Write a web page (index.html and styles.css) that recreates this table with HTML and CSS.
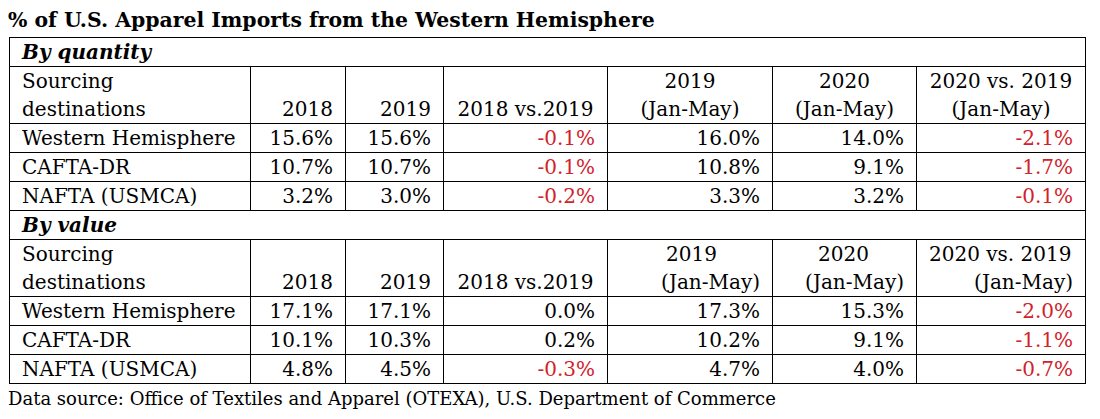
FILE: index.html
```html
<!DOCTYPE html>
<html>
<head>
<meta charset="utf-8">
<link rel="stylesheet" href="styles.css">
</head>
<body>
<div class="page">
  <h1 class="title">% of U.S. Apparel Imports from the Western Hemisphere</h1>
  <table class="grid">
    <colgroup>
      <col class="c1"><col class="c2"><col class="c3"><col class="c4"><col class="c5"><col class="c6"><col class="c7">
    </colgroup>
    <tbody>
      <tr class="section"><td colspan="7">By quantity</td></tr>
      <tr class="head">
        <td class="left">Sourcing<br>destinations</td>
        <td>2018</td>
        <td>2019</td>
        <td class="center">2018 vs.2019</td>
        <td class="center">2019<br>(Jan-May)</td>
        <td class="center">2020<br>(Jan-May)</td>
        <td class="center">2020 vs. 2019<br>(Jan-May)</td>
      </tr>
      <tr>
        <td class="left">Western Hemisphere</td><td>15.6%</td><td>15.6%</td><td class="neg">-0.1%</td><td>16.0%</td><td>14.0%</td><td class="neg">-2.1%</td>
      </tr>
      <tr>
        <td class="left">CAFTA-DR</td><td>10.7%</td><td>10.7%</td><td class="neg">-0.1%</td><td>10.8%</td><td>9.1%</td><td class="neg">-1.7%</td>
      </tr>
      <tr>
        <td class="left">NAFTA (USMCA)</td><td>3.2%</td><td>3.0%</td><td class="neg">-0.2%</td><td>3.3%</td><td>3.2%</td><td class="neg">-0.1%</td>
      </tr>
      <tr class="section"><td colspan="7">By value</td></tr>
      <tr class="head">
        <td class="left">Sourcing<br>destinations</td>
        <td>2018</td>
        <td>2019</td>
        <td class="center">2018 vs.2019</td>
        <td><span class="line l-2019">2019</span>(Jan-May)</td>
        <td><span class="line l-2020">2020</span>(Jan-May)</td>
        <td><span class="line l-vs">2020 vs. 2019</span>(Jan-May)</td>
      </tr>
      <tr>
        <td class="left">Western Hemisphere</td><td>17.1%</td><td>17.1%</td><td>0.0%</td><td>17.3%</td><td>15.3%</td><td class="neg">-2.0%</td>
      </tr>
      <tr>
        <td class="left">CAFTA-DR</td><td>10.1%</td><td>10.3%</td><td>0.2%</td><td>10.2%</td><td>9.1%</td><td class="neg">-1.1%</td>
      </tr>
      <tr>
        <td class="left">NAFTA (USMCA)</td><td>4.8%</td><td>4.5%</td><td class="neg">-0.3%</td><td>4.7%</td><td>4.0%</td><td class="neg">-0.7%</td>
      </tr>
    </tbody>
  </table>
  <p class="source">Data source: Office of Textiles and Apparel (OTEXA), U.S. Department of Commerce</p>
</div>
</body>
</html>
```

FILE: styles.css
```css
* { box-sizing: border-box; }

body {
  margin: 0;
  background: #ffffff;
  color: #000000;
  font-family: "DejaVu Serif", "Liberation Serif", serif;
}

.page {
  padding: 4px 0 0 8px;
}

.title {
  margin: 0;
  font-size: 20.4px;
  font-weight: bold;
  line-height: 33px;
  height: 33px;
  white-space: nowrap;
}

.grid {
  border-collapse: collapse;
  table-layout: fixed;
  width: 1076px;
  margin-left: 1px;
}

.c1 { width: 241px; }
.c2 { width: 95px; }
.c3 { width: 98px; }
.c4 { width: 164px; }
.c5 { width: 165px; }
.c6 { width: 144px; }
.c7 { width: 169px; }

.grid td {
  border: 1px solid #000000;
  padding: 0 12px;
  font-size: 20px;
  line-height: 28px;
  height: 29px;
  vertical-align: bottom;
  text-align: right;
  white-space: nowrap;
}

.grid .head td {
  height: 57px;
}

.grid td.left { text-align: left; }
.grid td.center { text-align: center; }

.grid .section td {
  text-align: left;
  font-weight: bold;
  font-style: italic;
}

.neg { color: #d0222a; }

.line { display: block; }
.l-2019 { padding-right: 43px; }
.l-2020 { padding-right: 35px; }
.l-vs { padding-right: 5px; }

.source {
  margin: 1px 0 0 0;
  font-size: 18px;
  line-height: 28px;
  white-space: nowrap;
}
```
